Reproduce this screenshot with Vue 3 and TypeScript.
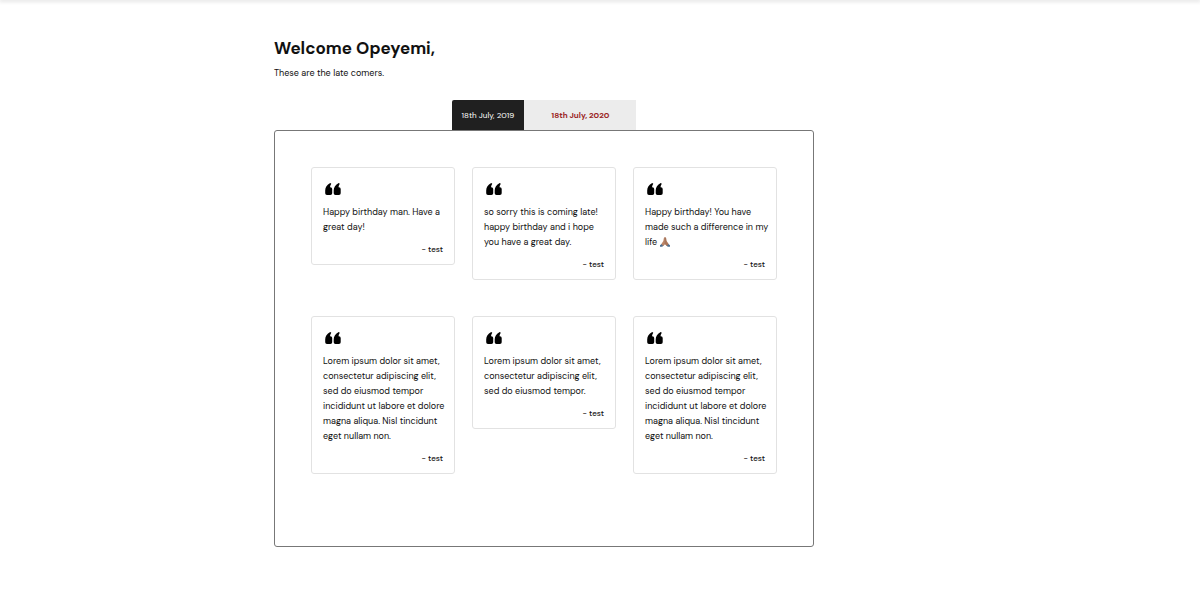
<script setup lang="ts">
import { ref } from 'vue'

interface Wish {
  text: string
  from: string
  thanks?: boolean
}

const lorem =
  'Lorem ipsum dolor sit amet,\nconsectetur adipiscing elit,\nsed do eiusmod tempor'
const loremLong = `${lorem}\nincididunt ut labore et dolore\nmagna aliqua. Nisl tincidunt\neget nullam non.`

const tabs: string[] = ['18th July, 2019', '18th July, 2020']
const active = ref(1)

const wishes: Wish[] = [
  { text: 'Happy birthday man. Have a\ngreat day!', from: 'test' },
  { text: 'so sorry this is coming late!\nhappy birthday and i hope\nyou have a great day.', from: 'test' },
  { text: 'Happy birthday! You have\nmade such a difference in my\nlife', from: 'test', thanks: true },
  { text: loremLong, from: 'test' },
  { text: `${lorem}.`, from: 'test' },
  { text: loremLong, from: 'test' },
]
</script>

<template>
  <div class="page">
    <header class="topbar"></header>
    <main class="content">
      <h1 class="title">Welcome Opeyemi,</h1>
      <p class="subtitle">These are the late comers.</p>

      <div class="tabs" role="tablist">
        <button
          v-for="(tab, i) in tabs"
          :key="tab"
          type="button"
          role="tab"
          class="tab"
          :class="{ selected: active === i }"
          :aria-selected="active === i"
          @click="active = i"
        >{{ tab }}</button>
      </div>

      <section class="panel">
        <article v-for="(wish, i) in wishes" :key="i" class="card">
          <svg class="quote" viewBox="0 0 16 12" aria-hidden="true">
            <path d="M5.2 0 L6.3 .7 Q5.1 2.2 5 4.3 H5.4 Q7.2 4.3 7.2 6.1 V10.2 Q7.2 12 5.4 12 H2 Q.2 12 .2 10.2 V7.4 Q.2 3 5.2 0Z" />
            <path d="M13.7 0 L14.8 .7 Q13.6 2.2 13.5 4.3 H13.9 Q15.7 4.3 15.7 6.1 V10.2 Q15.7 12 13.9 12 H10.5 Q8.7 12 8.7 10.2 V7.4 Q8.7 3 13.7 0Z" />
          </svg>
          <p class="text">{{ wish.text }}<template v-if="wish.thanks">&nbsp;<svg class="hands" viewBox="0 0 18 18" role="img" aria-label="folded hands">
              <path fill="#4c6f91" d="M0 15 L4 11.5 L7 15 L4 17.5 H0Z M18 15 L14 11.5 L11 15 L14 17.5 H18Z" />
              <path fill="#bd8566" d="M8.8 .5 Q7 .3 6.8 2.5 L6 7 L2.5 12.5 L5.5 16 L8.8 13.5Z" />
              <path fill="#ad7558" d="M9.2 .5 Q11 .3 11.2 2.5 L12 7 L15.5 12.5 L12.5 16 L9.2 13.5Z" />
              <path fill="none" stroke="#80503a" stroke-width="1" d="M9 1 V13" />
            </svg></template></p>
          <p class="from">- {{ wish.from }}</p>
        </article>
      </section>
    </main>
  </div>
</template>

<style>
body {
  margin: 0;
  background: #fff;
}
</style>

<style scoped>
.page {
  font-family: 'DM Sans', Inter, 'Liberation Sans', sans-serif;
  color: #111;
  overflow: hidden;
}
.topbar {
  height: 0;
  box-shadow: 0 0 4px 1px rgba(0, 0, 0, 0.2);
}
.content {
  box-sizing: border-box;
  width: 45%;
  min-width: 540px;
  margin: 36px 0 46px 274px;
}
.title {
  margin: 0;
  font-size: 17px;
  line-height: 24px;
  font-weight: 700;
}
.subtitle {
  margin: 6px 0 20px;
  font-size: 9px;
  line-height: 14px;
}
.tabs {
  display: flex;
  justify-content: center;
}
.tab {
  height: 30px;
  padding: 0 10px;
  border: 0;
  border-radius: 2px 0 0 0;
  background: #202020;
  color: #fff;
  font-family: inherit;
  font-size: 8px;
  line-height: 12px;
  cursor: pointer;
}
.tab.selected {
  padding: 0 27px;
  border-radius: 0;
  background: #ececec;
  color: #9b2525;
  font-weight: 700;
}
.panel {
  display: grid;
  grid-template-columns: repeat(3, 1fr);
  align-items: start;
  gap: 36px 17px;
  padding: 36px 36px 72px;
  border: 1px solid #777;
  border-radius: 3px;
}
.card {
  padding: 15px 7px 8px 11px;
  border: 1px solid #e2e2e2;
  border-radius: 3px;
}
.quote {
  display: block;
  width: 16px;
  height: 12px;
  margin-left: 2px;
  fill: #000;
}
.text {
  margin: 10px 0 7px;
  font-size: 9px;
  line-height: 15px;
  white-space: pre-line;
}
.hands {
  display: inline-block;
  width: 10px;
  height: 10px;
  vertical-align: -2px;
}
.from {
  margin: 0 4px 0 0;
  font-size: 8px;
  line-height: 14px;
  font-weight: 500;
  text-align: right;
}
</style>
